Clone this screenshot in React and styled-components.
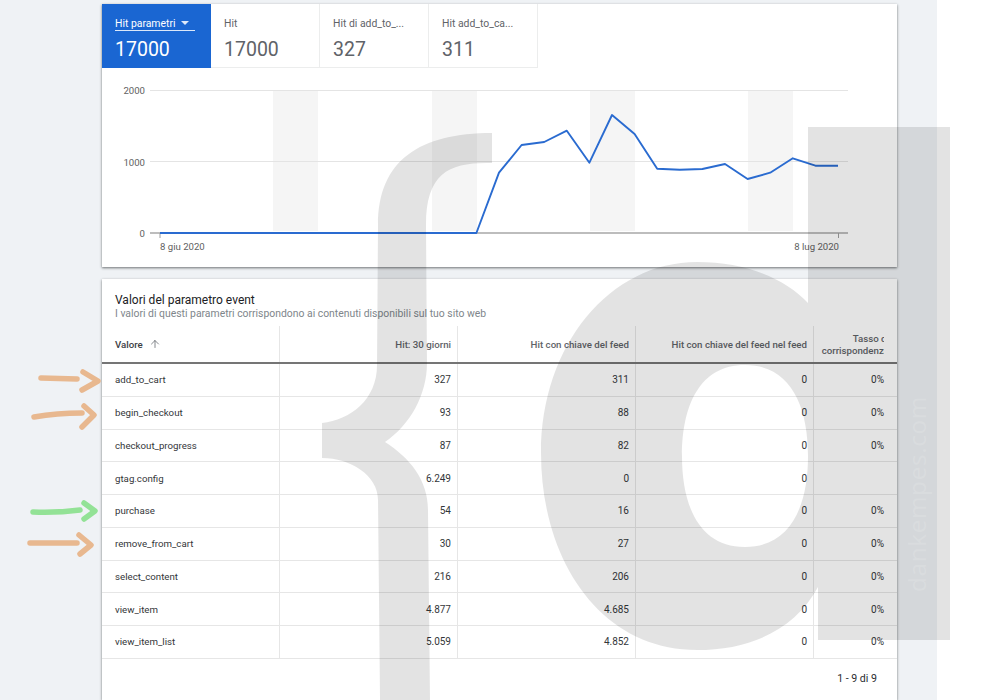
import React from 'react'
import styled, { createGlobalStyle } from 'styled-components'
import { ArrowUp } from 'lucide-react'

const GlobalStyle = createGlobalStyle`
  html, body {
    margin: 0;
    padding: 0;
    background: #fff;
    font-family: Roboto, "Liberation Sans", sans-serif;
    overflow: hidden;
  }
`

const metrics = [
  { label: 'Hit parametri', value: '17000', active: true },
  { label: 'Hit', value: '17000' },
  { label: 'Hit di add_to_...', value: '327' },
  { label: 'Hit add_to_ca...', value: '311' },
]

const rows = [
  ['add_to_cart', '327', '311', '0', '0%'],
  ['begin_checkout', '93', '88', '0', '0%'],
  ['checkout_progress', '87', '82', '0', '0%'],
  ['gtag.config', '6.249', '0', '0', ''],
  ['purchase', '54', '16', '0', '0%'],
  ['remove_from_cart', '30', '27', '0', '0%'],
  ['select_content', '216', '206', '0', '0%'],
  ['view_item', '4.877', '4.685', '0', '0%'],
  ['view_item_list', '5.059', '4.852', '0', '0%'],
]

// y del grafico per ogni giorno, i primi 15 sono a zero
const trend = [172.7, 145, 142, 130.7, 162.7, 115, 134, 168.7, 169.7, 169, 164, 179, 172.7, 158.3, 165.7, 165.7]
const linePoints = [
  '160,233',
  '476.4,233',
  ...trend.map((y, i) => `${(160 + 22.6 * (i + 15)).toFixed(1)},${y}`),
].join(' ')

const weekends = [273, 432, 590, 748]

export default function App() {
  return (
    <Page>
      <GlobalStyle />
      <Panel>
        <Card>
          <Tabs>
            {metrics.map((m) => (
              <Tab key={m.label} $active={m.active}>
                <TabLabel $active={m.active}>
                  {m.label}
                  {m.active && <Caret />}
                </TabLabel>
                <TabValue>{m.value}</TabValue>
              </Tab>
            ))}
          </Tabs>
          <Chart viewBox="102 68 795 199" width="795" height="199">
            {weekends.map((x) => (
              <rect key={x} x={x} y="90" width="45" height="141" fill="#f5f5f5" />
            ))}
            <line x1="150" x2="848" y1="90.5" y2="90.5" stroke="#e4e4e4" />
            <line x1="150" x2="848" y1="161.5" y2="161.5" stroke="#e4e4e4" />
            <line x1="150" x2="848" y1="233" y2="233" stroke="#bdbdbd" strokeWidth="2" />
            <line x1="160" x2="160" y1="233" y2="238" stroke="#9e9e9e" />
            <line x1="838.5" x2="838.5" y1="233" y2="238" stroke="#9e9e9e" />
            <polyline points={linePoints} fill="none" stroke="#2a6bd0" strokeWidth="1.9" strokeLinejoin="round" />
            <AxisText x="145" y="94" textAnchor="end">2000</AxisText>
            <AxisText x="145" y="165.500" textAnchor="end">1000</AxisText>
            <AxisText x="145" y="237" textAnchor="end">0</AxisText>
            <AxisText x="160" y="250">8 giu 2020</AxisText>
            <AxisText x="839" y="250" textAnchor="end">8 lug 2020</AxisText>
          </Chart>
        </Card>

        <TableCard>
          <CardHead>
            <Title>Valori del parametro event</Title>
            <Subtitle>I valori di questi parametri corrispondono ai contenuti disponibili sul tuo sito web</Subtitle>
          </CardHead>
          <HeadRow>
            <HeadCell $first>
              <SortLabel>Valore <ArrowUp size={12} strokeWidth={1.5} color="#5f6368" /></SortLabel>
            </HeadCell>
            <HeadCell>Hit: 30 giorni</HeadCell>
            <HeadCell>Hit con chiave del feed</HeadCell>
            <HeadCell>Hit con chiave del feed nel feed</HeadCell>
            <LastHeadCell>
              <ClipBox>
                <ClipText>Tasso di<br />corrispondenza</ClipText>
              </ClipBox>
            </LastHeadCell>
          </HeadRow>
          {rows.map((r) => (
            <Row key={r[0]}>
              <Cell $first>{r[0]}</Cell>
              <Cell>{r[1]}</Cell>
              <Cell>{r[2]}</Cell>
              <Cell>{r[3]}</Cell>
              <Cell $last>{r[4]}</Cell>
            </Row>
          ))}
          <Footer>1 - 9 di 9</Footer>
        </TableCard>
      </Panel>

      {/* logo sopra la pagina */}
      <Overlay viewBox="0 0 1000 700" width="1000" height="700">
        <path
          fill="rgba(0,0,0,0.11)"
          d="M492,133 L492,163 C450,162 426,172 426,225 L427,363 C427,395 410,425 385,442 C410,458 428,480 428,510 L430,700 L380,700 L378,500 C378,475 350,458 322,458 L322,423 C350,420 377,400 377,365 L378,225 C378,160 420,133 492,133 Z"
        />
        <path
          fill="rgba(0,0,0,0.11)"
          fillRule="evenodd"
          d="M808,127 L950,127 L950,640 L818,640 L818,587 C795,630 750,650 697,650 C600,650 541,560 541,453 C541,345 610,262 697,262 C745,262 785,278 808,303 Z M745,365 C790,365 808,405 808,456 C808,507 790,547 745,547 C700,547 682,507 682,456 C682,405 700,365 745,365 Z"
        />
        <Brand transform="translate(926 592) rotate(-90)">dankempes.com</Brand>
      </Overlay>

      {/* frecce disegnate a mano */}
      <Overlay viewBox="0 0 1000 700" width="1000" height="700">
        <Arrow stroke="#e8b88f" d="M41,378 L77,379 M83,372 L98,381 L82,390" />
        <Arrow stroke="#e8b88f" d="M34,417 Q57,413 82,413 M84,406 L94,415 L82,427" />
        <Arrow stroke="#93e296" d="M33,512 Q57,513 80,510 M84,503 L95,511 L84,519" />
        <Arrow stroke="#e8b88f" d="M30,543 L77,543 M79,535 L91,545 L80,554" />
      </Overlay>
    </Page>
  )
}

const Page = styled.div`
  position: relative;
  width: 1000px;
  height: 700px;
  overflow: hidden;
  background: #fff;
`

const Panel = styled.div`
  box-sizing: border-box;
  width: 937px;
  height: 700px;
  padding: 4px 40px 0 102px;
  background: #eff2f5;
  display: flex;
  flex-direction: column;
  gap: 12px;
`

const Card = styled.section`
  background: #fff;
  box-shadow: 0 1px 2px rgba(60, 64, 67, 0.55), 0 1px 3px rgba(60, 64, 67, 0.25);
  flex: none;
`

const TableCard = styled(Card)`
  flex: 1;
`

const Tabs = styled.div`
  display: flex;
  height: 64px;
`

const Tab = styled.div`
  box-sizing: border-box;
  width: 109px;
  padding: 15px 13px 0;
  background: ${(p) => (p.$active ? '#1a66d2' : '#fff')};
  color: ${(p) => (p.$active ? '#fff' : '#5f6368')};
  border-right: ${(p) => (p.$active ? 'none' : '1px solid #eceded')};
  border-bottom: ${(p) => (p.$active ? 'none' : '1px solid #eceded')};
`

const TabLabel = styled.div`
  box-sizing: border-box;
  font-size: 10.4px;
  line-height: 10px;
  height: 12px;
  white-space: nowrap;
  border-bottom: ${(p) => (p.$active ? '1px solid #dce8fa' : 'none')};
  margin-right: ${(p) => (p.$active ? '3px' : '0')};
`

const Caret = styled.span`
  display: inline-block;
  margin-left: 6px;
  vertical-align: 2px;
  border-left: 4.5px solid transparent;
  border-right: 4.5px solid transparent;
  border-top: 4.5px solid #dce8fa;
`

const TabValue = styled.div`
  margin-top: 7px;
  font-size: 19.5px;
  line-height: 24px;
`

const Chart = styled.svg`
  display: block;
`

const AxisText = styled.text`
  font-size: 9.6px;
  fill: #616161;
`

const CardHead = styled.header`
  height: 47px;
  box-sizing: border-box;
  padding: 14px 13px 0;
`

const Title = styled.div`
  font-size: 12px;
  line-height: 15px;
  color: #202124;
`

const Subtitle = styled.div`
  margin-top: -1px;
  font-size: 10.4px;
  line-height: 13px;
  color: #80868b;
`

const Row = styled.div`
  display: grid;
  grid-template-columns: 178px 178px 178px 178px 83px;
  height: 32.75px;
  box-sizing: border-box;
  border-bottom: 1px solid #e6e6e6;
`

const HeadRow = styled(Row)`
  height: 38px;
  border-bottom: 2px solid #757575;
`

const Cell = styled.div`
  box-sizing: border-box;
  display: flex;
  align-items: center;
  justify-content: ${(p) => (p.$first ? 'flex-start' : 'flex-end')};
  padding: ${(p) => (p.$first ? '0 0 0 13px' : p.$last ? '0 13px 0 0' : '0 6px 0 0')};
  border-right: ${(p) => (p.$last ? 'none' : '1px solid #e6e6e6')};
  font-size: ${(p) => (p.$first ? '9.7px' : '10px')};
  color: #333639;
`

const HeadCell = styled(Cell)`
  font-size: 9.7px;
  font-weight: 500;
  color: #5f6368;
`

const LastHeadCell = styled(HeadCell)`
  border-right: none;
  padding: 1px 13px 0 6px;
`

const SortLabel = styled.span`
  display: flex;
  align-items: center;
  gap: 6px;
  color: #3c4043;
`

const ClipBox = styled.div`
  width: 64px;
  overflow: hidden;
`

const ClipText = styled.div`
  width: 69px;
  text-align: right;
  line-height: 12px;
  white-space: nowrap;
`

const Footer = styled.div`
  display: flex;
  justify-content: flex-end;
  padding: 13px 20px 0 0;
  font-size: 10.6px;
  line-height: 14px;
  color: #2b2d30;
`

const Overlay = styled.svg`
  position: absolute;
  left: 0;
  top: 0;
  pointer-events: none;
`

const Brand = styled.text`
  font-family: "Open Sans", sans-serif;
  font-size: 24.4px;
  letter-spacing: 0.6px;
  fill: rgba(255, 255, 255, 0.14);
`

const Arrow = styled.path`
  fill: none;
  stroke-width: 5.5;
  stroke-linecap: round;
  stroke-linejoin: round;
`
